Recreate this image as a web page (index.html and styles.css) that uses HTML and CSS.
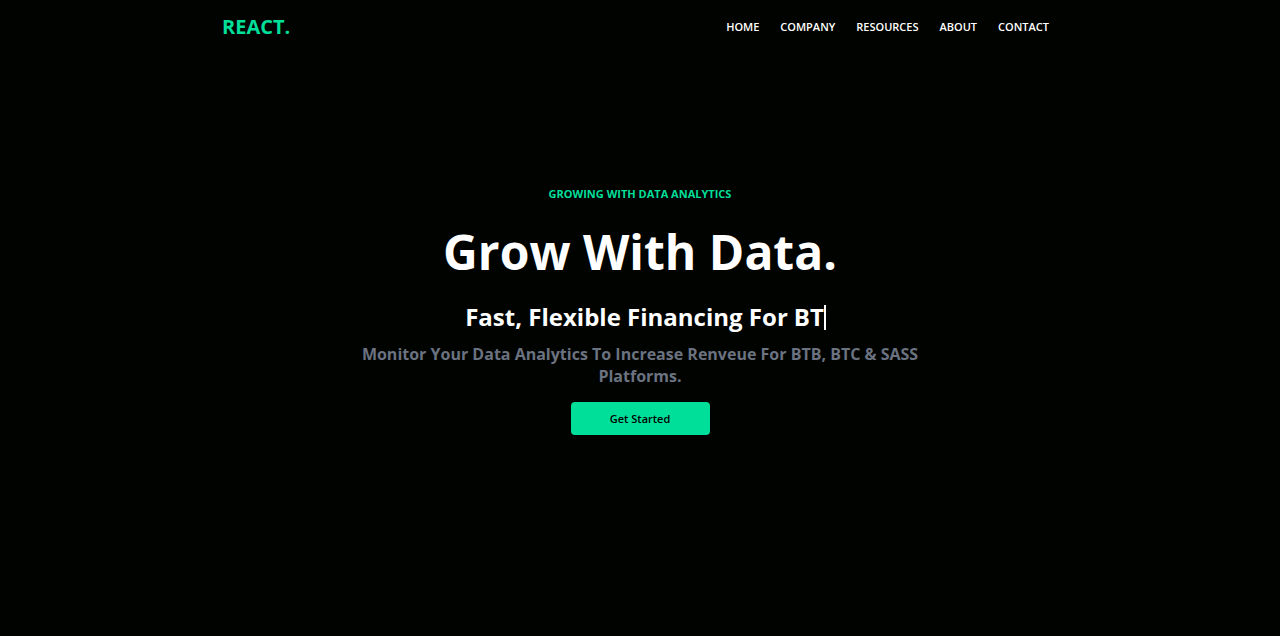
FILE: index.html
```html
<!DOCTYPE html>
<html lang="en">
<head>
<meta charset="utf-8">
<meta name="viewport" content="width=device-width, initial-scale=1">
<title>React.</title>
<link rel="stylesheet" href="styles.css">
</head>
<body>
<header class="navbar">
  <a class="brand" href="#">REACT.</a>
  <nav>
    <ul class="nav-list">
      <li><a href="#">HOME</a></li>
      <li><a href="#">COMPANY</a></li>
      <li><a href="#">RESOURCES</a></li>
      <li><a href="#">ABOUT</a></li>
      <li><a href="#">CONTACT</a></li>
    </ul>
  </nav>
</header>
<main class="hero">
  <p class="eyebrow">GROWING WITH DATA ANALYTICS</p>
  <h1 class="title">Grow With Data.</h1>
  <div class="typed-line">
    <p>Fast, Flexible Financing For</p>
    <span class="typed">BT</span><span class="cursor"></span>
  </div>
  <p class="summary">Monitor Your Data Analytics To Increase Renveue For BTB, BTC &amp; SASS Platforms.</p>
  <button class="cta" type="button">Get Started</button>
</main>
</body>
</html>
```

FILE: styles.css
```css
* {
  box-sizing: border-box;
  margin: 0;
  padding: 0;
}

body {
  min-height: 100vh;
  display: flex;
  flex-direction: column;
  background: #000300;
  color: #fff;
  font-family: "Segoe UI", "Open Sans", "Noto Sans", sans-serif;
}

.navbar {
  width: 100%;
  max-width: 858px;
  margin: 0 auto;
  padding: 12px 20px 12px 11px;
  display: flex;
  align-items: center;
  justify-content: space-between;
}

.brand {
  color: #00df9a;
  font-size: 20px;
  line-height: 30px;
  font-weight: 700;
  text-decoration: none;
}

.nav-list {
  display: flex;
  gap: 21px;
  list-style: none;
}

.nav-list a {
  display: block;
  color: #fff;
  font-size: 11px;
  line-height: 16px;
  font-weight: 600;
  text-decoration: none;
}

.hero {
  width: 100%;
  max-width: 572px;
  margin: 0 auto;
  padding-bottom: 69px;
  flex: 1;
  display: flex;
  flex-direction: column;
  align-items: center;
  justify-content: center;
  text-align: center;
}

.eyebrow {
  color: #00df9a;
  font-size: 11px;
  line-height: 16px;
  font-weight: 700;
}

.title {
  padding: 17px 0 15px;
  font-size: 48px;
  line-height: 66px;
  font-weight: 700;
}

.typed-line {
  padding-left: 11px;
  display: flex;
  align-items: center;
  font-size: 24px;
  line-height: 34px;
  font-weight: 700;
}

.typed {
  padding-left: 6px;
}

.cursor {
  width: 2px;
  height: 25px;
  background: #fff;
}

.summary {
  margin-top: 9px;
  color: #6b7280;
  font-size: 16px;
  line-height: 22px;
  font-weight: 700;
}

.cta {
  width: 139px;
  margin-top: 15px;
  padding: 8px;
  border: 0;
  border-radius: 4px;
  background: #00df9a;
  color: #000;
  font-family: inherit;
  font-size: 11px;
  line-height: 17px;
  font-weight: 600;
}
```
